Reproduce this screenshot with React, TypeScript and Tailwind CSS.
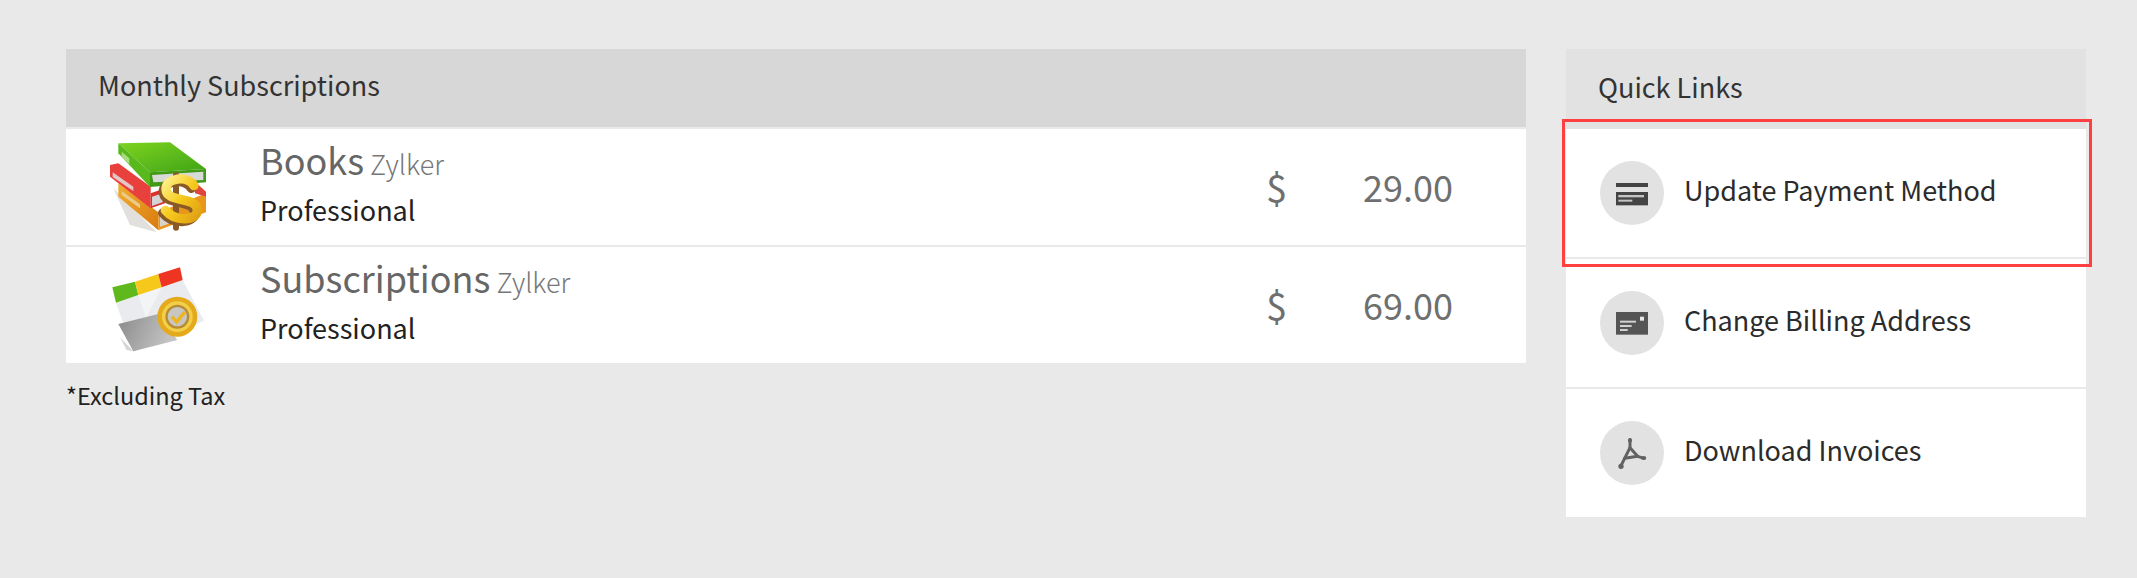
import type React from "react";

type Subscription = {
  name: string;
  vendor: string;
  plan: string;
  amount: string;
  icon: React.ReactNode;
};

const BooksIcon: React.FC = () => (
  <svg width="100" height="100" viewBox="54 36 300 300">
    <defs>
      <linearGradient id="greenTop" x1="0" y1="0" x2="1" y2="1">
        <stop offset="0" stopColor="#7ed321" />
        <stop offset="1" stopColor="#3fa416" />
      </linearGradient>
      <linearGradient id="gold" x1="0" y1="0" x2="1" y2="1">
        <stop offset="0" stopColor="#fff08a" />
        <stop offset="0.5" stopColor="#f6c91e" />
        <stop offset="1" stopColor="#e0a010" />
      </linearGradient>
      <linearGradient id="orangeSide" x1="0" y1="0" x2="1" y2="1">
        <stop offset="0" stopColor="#f0b030" />
        <stop offset="1" stopColor="#d97a10" />
      </linearGradient>
      <filter id="soft">
        <feGaussianBlur stdDeviation="1.8" />
      </filter>
    </defs>
    <g filter="url(#soft)">
      <polygon points="70,190 200,322 120,300" fill="#e2e0dc" />
      {/* orange book */}
      <polygon points="85,175 205,262 205,316 85,215" fill="url(#orangeSide)" />
      <polygon points="95,198 150,238 150,250 95,210" fill="#eccb8a" />
      <polygon points="205,262 348,205 348,262 205,316" fill="#e8961c" />
      <polygon points="210,275 240,265 240,295 210,305" fill="#d8d4cc" />
      {/* red book */}
      <polygon points="60,120 85,115 182,185 182,250 60,155" fill="#e8403c" />
      <polygon points="68,142 130,185 130,198 68,156" fill="#e4c8c8" />
      <polygon points="182,205 225,190 225,235 182,250" fill="#d8302c" />
      <polygon points="186,215 218,205 218,232 186,243" fill="#d4d4d4" />
      <polygon points="315,170 348,200 348,215 315,205" fill="#e04440" />
      {/* green book */}
      <polygon points="85,55 240,52 348,132 180,142" fill="url(#greenTop)" />
      <polygon points="85,55 180,142 180,186 85,85" fill="#58b81c" />
      <polygon points="95,80 118,100 118,118 95,96" fill="#a8dc80" />
      <polygon points="180,142 348,132 348,172 180,186" fill="#3f9a18" />
      <polygon points="186,150 340,140 340,165 190,172" fill="#d8dad8" />
      {/* dollar sign */}
      <g fill="none" strokeLinecap="round" transform="translate(-8 8)" stroke="#8a5a28">
        <path d="M312 182C292 150 228 158 228 192C228 236 322 212 322 256C322 288 256 292 226 256" strokeWidth="28" />
        <path d="M266 142V300" strokeWidth="18" />
      </g>
      <g fill="none" strokeLinecap="round" stroke="url(#gold)">
        <path d="M312 182C292 150 228 158 228 192C228 236 322 212 322 256C322 288 256 292 226 256" strokeWidth="28" />
        <path d="M266 142V300" strokeWidth="18" />
      </g>
    </g>
  </svg>
);

const SubscriptionsIcon: React.FC = () => (
  <svg width="100" height="100" viewBox="54 15 300 300">
    <defs>
      <linearGradient id="folder" x1="0" y1="0" x2="1" y2="0.3">
        <stop offset="0" stopColor="#8a8a8a" />
        <stop offset="1" stopColor="#c4c4c4" />
      </linearGradient>
      <filter id="softer">
        <feGaussianBlur stdDeviation="2.2" />
      </filter>
    </defs>
    <g filter="url(#softer)">
      <polygon points="78,158 278,90 342,212 130,306" fill="#e9ebee" />
      <polygon points="145,135 168,205 215,112" fill="#f3f4f5" />
      <polygon points="67,112 135,95 145,135 78,158" fill="#5fb81e" />
      <polygon points="135,95 205,72 215,112 145,135" fill="#f6c81e" />
      <polygon points="205,72 270,52 278,90 215,112" fill="#ee3424" />
      <polygon points="85,222 205,192 262,270 130,304" fill="url(#folder)" />
      <polygon points="110,300 130,304 90,262" fill="#d4d4d4" />
      <ellipse cx="262" cy="200" rx="60" ry="60" fill="#e4aa1c" />
      <ellipse cx="262" cy="200" rx="46" ry="46" fill="#f2cf48" />
      <ellipse cx="262" cy="200" rx="36" ry="36" fill="#b88c34" />
      <ellipse cx="262" cy="200" rx="29" ry="29" fill="#c8c6c0" />
      <path d="M246 200L260 216L284 186" fill="none" stroke="#eeb41c" strokeWidth="10" />
    </g>
  </svg>
);

const CardIcon: React.FC = () => (
  <svg width="64" height="64" viewBox="0 0 192 192">
    <rect x="48" y="66" width="96" height="12" fill="#444444" />
    <rect x="48" y="93" width="96" height="40" fill="#444444" />
    <rect x="55" y="102" width="77" height="7" fill="#c4c4c4" />
    <rect x="55" y="116" width="42" height="6" fill="#c4c4c4" />
  </svg>
);

const AddressIcon: React.FC = () => (
  <svg width="64" height="64" viewBox="0 0 192 192">
    <rect x="48" y="63" width="96" height="68" fill="#555555" />
    <rect x="60" y="89" width="48" height="6" fill="#d0d0d0" />
    <rect x="60" y="102" width="35" height="6" fill="#d0d0d0" />
    <rect x="60" y="114" width="23" height="6" fill="#d0d0d0" />
    <rect x="120" y="77" width="12" height="12" fill="#e8e8e8" />
  </svg>
);

const PdfIcon: React.FC = () => (
  <svg width="64" height="64" viewBox="0 0 192 192">
    <g fill="none" stroke="#626262" strokeWidth="9" strokeLinejoin="round" strokeLinecap="round">
      <path d="M90 56L90 80L113 106L132 112" />
      <path d="M90 80L74 112L62 136" />
      <path d="M74 112L113 106" />
    </g>
    <ellipse cx="63" cy="136" rx="8" ry="8" fill="#626262" />
    <ellipse cx="131" cy="111" rx="8" ry="6" fill="#626262" />
    <ellipse cx="90" cy="58" rx="6" ry="7" fill="#626262" />
  </svg>
);

const subscriptions: Subscription[] = [
  { name: "Books", vendor: "Zylker", plan: "Professional", amount: "29.00", icon: <BooksIcon /> },
  { name: "Subscriptions", vendor: "Zylker", plan: "Professional", amount: "69.00", icon: <SubscriptionsIcon /> },
];

const quickLinks = [
  { label: "Update Payment Method", icon: <CardIcon /> },
  { label: "Change Billing Address", icon: <AddressIcon /> },
  { label: "Download Invoices", icon: <PdfIcon /> },
];

export default function App() {
  return (
    <div className="min-h-[578px] bg-[#e9e9e9] pl-[66px] pt-[49px] font-['Noto_Sans_CJK_SC',sans-serif]">
      <div className="flex items-start gap-[40px]">
        {/* Subscriptions table */}
        <div className="w-[1460px]">
          <div className="flex h-[78px] items-center bg-[#d7d7d7] pb-[6px] pl-[32px] text-[27px] text-[#333333]">
            Monthly Subscriptions
          </div>
          <div className="mt-[2px] flex flex-col gap-[2px]">
            {subscriptions.map((sub) => (
              <div key={sub.name} className="flex h-[116px] items-center bg-white pl-[42px] pr-[73px]">
                <div className="mr-[52px] w-[100px] shrink-0">{sub.icon}</div>
                <div className="flex-1 pb-[4px]">
                  <div className="flex items-baseline gap-[6px] leading-[45px]">
                    <span className="text-[36px] text-[#666666]">{sub.name}</span>
                    <span className="text-[27px] font-light text-[#777777]">{sub.vendor}</span>
                  </div>
                  <div className="text-[27px] leading-[48px] text-[#222222]">{sub.plan}</div>
                </div>
                <div className="pb-[2px] text-[38px] text-[#6f6f6f]">$</div>
                <div className="w-[166px] pb-[2px] text-right text-[36px] text-[#6f6f6f]">{sub.amount}</div>
              </div>
            ))}
          </div>
          <div className="mt-[17px] text-[23.5px] leading-[30px] text-[#222222]">*Excluding Tax</div>
        </div>

        {/* Quick links */}
        <div className="relative w-[520px]">
          <div className="flex h-[80px] items-center bg-[#e2e2e2] pb-[3px] pl-[32px] text-[27px] text-[#333333]">
            Quick Links
          </div>
          <div className="flex flex-col gap-[2px]">
            {quickLinks.map((link) => (
              <div key={link.label} className="flex h-[128px] items-center gap-[20px] bg-white pl-[34px] text-[27px] text-[#2b2b2b]">
                <div className="h-[64px] w-[64px] shrink-0 rounded-full bg-[#e2e2e2]">{link.icon}</div>
                <span className="pb-[6px]">{link.label}</span>
              </div>
            ))}
          </div>
          {/* highlight drawn over the first link */}
          <div className="absolute left-[-4px] top-[70px] h-[148px] w-[530px] border-[3px] border-[#ff4040]" />
        </div>
      </div>
    </div>
  );
}
